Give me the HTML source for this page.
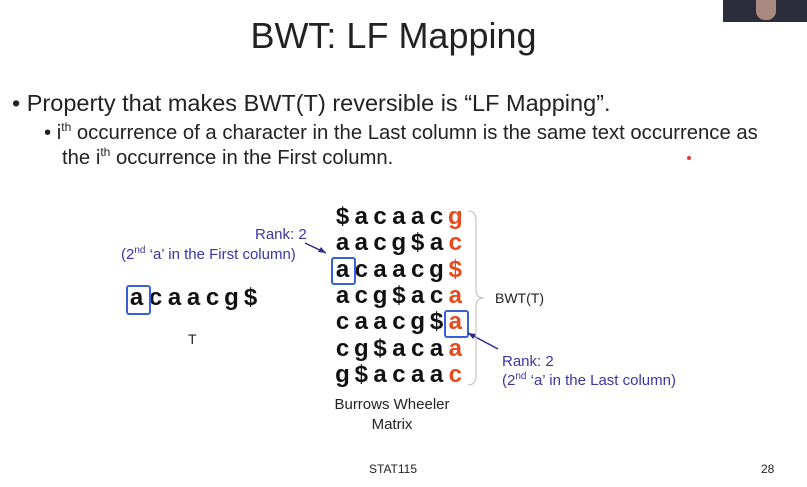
<!DOCTYPE html>
<html><head><style>
body{margin:0;width:807px;height:487px;background:#fff;position:relative;overflow:hidden;font-family:"Liberation Sans",sans-serif;}
.a{position:absolute;white-space:nowrap}
.m{position:absolute;font-weight:bold;font-size:24px;color:#111;width:19px;text-align:center;line-height:26px}
.r{color:#e8491d}
.box{position:absolute;border:2px solid #3a5fd9;border-radius:3px}
.blue{color:#3b35a8;font-size:15px}
sup{line-height:0}
</style></head><body>
<div class="a" style="left:723px;top:0;width:84px;height:22px;background:#2b2e3a"></div>
<div class="a" style="left:756px;top:0;width:20px;height:20px;background:#a88a80;border-radius:0 0 9px 9px"></div>
<div class="a" style="left:-10px;top:15px;width:807px;text-align:center;font-size:36px;color:#222">BWT: LF Mapping</div>
<div class="a" style="left:12px;top:90px;font-size:23.5px;color:#222">• Property that makes BWT(T) reversible is “LF Mapping”.</div>
<div class="a" style="left:44px;top:121px;font-size:20.3px;color:#222;line-height:25px">• i<sup style="font-size:12px">th</sup> occurrence of a character in the Last column is the same text occurrence as<br><span style="padding-left:18px">the i<sup style="font-size:12px">th</sup> occurrence in the First column.</span></div>
<div class="a" style="left:687px;top:156px;width:4px;height:4px;border-radius:2px;background:#e33"></div>
<div id="mx"></div>
<div class="box" style="left:331px;top:257px;width:21px;height:24px"></div>
<div class="box" style="left:444px;top:310px;width:21px;height:24px"></div>
<div class="box" style="left:126px;top:285px;width:21px;height:26px"></div>
<div class="a blue" style="left:255px;top:226px">Rank: 2</div>
<div class="a blue" style="left:121px;top:246px">(2<sup style="font-size:10px">nd</sup> ‘a’ in the First column)</div>
<div class="a blue" style="left:502px;top:353px">Rank: 2</div>
<div class="a blue" style="left:502px;top:372px">(2<sup style="font-size:10px">nd</sup> ‘a’ in the Last column)</div>
<svg class="a" style="left:0;top:0" width="807" height="487">
<path d="M305 243 L326 253" stroke="#2a2a8a" stroke-width="1.5"/><path d="M326 253 L318 252 L321 247Z" fill="#2a2a8a"/>
<path d="M498 349 L468 333" stroke="#2a2a8a" stroke-width="1.5"/><path d="M468 333 L476 334 L473 339Z" fill="#2a2a8a"/>
<path d="M468 211 Q476 211 476 220 L476 290 Q476 298 484 298 Q476 298 476 306 L476 376 Q476 385 468 385" fill="none" stroke="#bbb" stroke-width="1"/>
</svg>
<div class="a" style="left:495px;top:290px;font-size:14px;color:#222">BWT(T)</div>
<div class="a" style="left:188px;top:331px;font-size:14px;color:#222">T</div>
<div class="a" style="left:326px;top:395px;width:132px;text-align:center;font-size:15px;color:#222;line-height:20px">Burrows Wheeler<br>Matrix</div>
<div class="a" style="left:369px;top:462px;font-size:12px;color:#222">STAT115</div>
<div class="a" style="left:761px;top:462px;font-size:12px;color:#222">28</div>
<script>
var rows=["$acaacg","aacg$ac","acaacg$","acg$aca","caacg$a","cg$acaa","g$acaac"];
var h="";
rows.forEach(function(r,i){for(var j=0;j<7;j++){h+='<div class="m'+(j==6?' r':'')+'" style="left:'+(333+j*18.8)+'px;top:'+(204+i*26.3)+'px">'+r[j]+'</div>';}});
var t="acaacg$";for(var j=0;j<7;j++){h+='<div class="m" style="left:'+(127+j*19)+'px;top:285px">'+t[j]+'</div>';}
document.getElementById("mx").innerHTML=h;
</script>
</body></html>
